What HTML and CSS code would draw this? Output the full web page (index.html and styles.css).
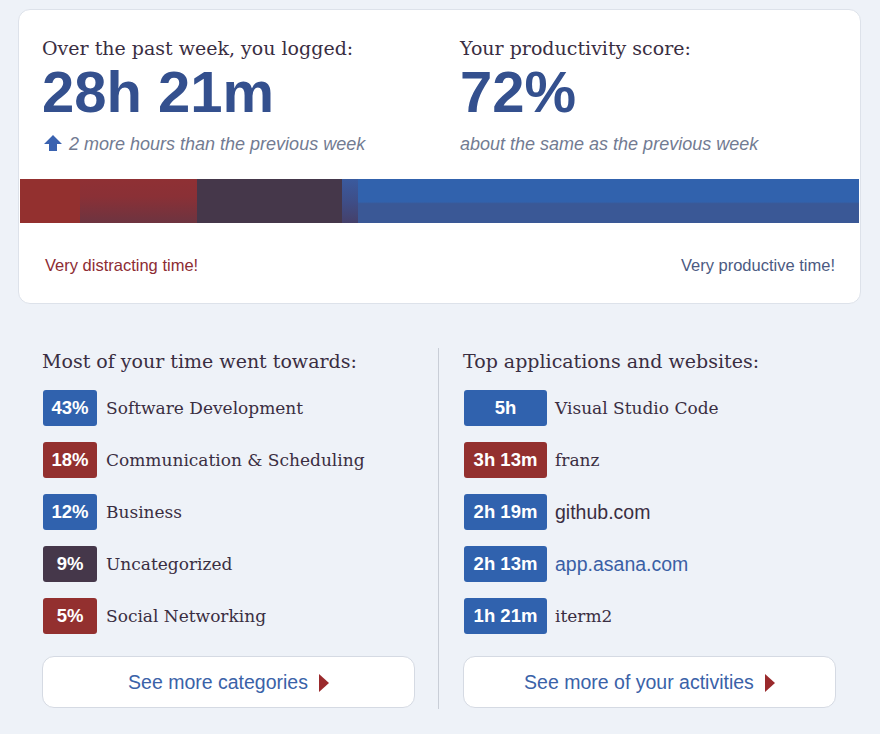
FILE: index.html
```html
<!DOCTYPE html>
<html>
<head>
<meta charset="utf-8">
<link rel="stylesheet" href="styles.css">
</head>
<body>
<div class="card">
  <div class="stats">
    <div class="stat stat-left">
      <div class="stat-title">Over the past week, you logged:</div>
      <div class="stat-value">28h 21m</div>
      <div class="stat-note">
        <svg class="up-arrow" width="20" height="18" viewBox="0 0 20 18"><path d="M10 1 L19 10 L14 10 L14 17 L6 17 L6 10 L1 10 Z" fill="#3a62b0"/></svg>
        <span>2 more hours than the previous week</span>
      </div>
    </div>
    <div class="stat stat-right">
      <div class="stat-title">Your productivity score:</div>
      <div class="stat-value">72%</div>
      <div class="stat-note"><span>about the same as the previous week</span></div>
    </div>
  </div>
  <div class="bar">
    <div class="seg seg-red"></div>
    <div class="seg seg-redmix"></div>
    <div class="seg seg-purple"></div>
    <div class="seg seg-mix"></div>
    <div class="seg seg-blue"></div>
  </div>
  <div class="bar-labels">
    <span class="lbl-bad">Very distracting time!</span>
    <span class="lbl-good">Very productive time!</span>
  </div>
</div>

<div class="lists">
  <div class="col col-left">
    <h2 class="col-title">Most of your time went towards:</h2>
    <ul class="rows">
      <li class="row"><span class="badge b-blue">43%</span><span class="name">Software Development</span></li>
      <li class="row"><span class="badge b-red">18%</span><span class="name">Communication &amp; Scheduling</span></li>
      <li class="row"><span class="badge b-blue">12%</span><span class="name">Business</span></li>
      <li class="row"><span class="badge b-purple">9%</span><span class="name">Uncategorized</span></li>
      <li class="row"><span class="badge b-red">5%</span><span class="name">Social Networking</span></li>
    </ul>
    <a class="more" href="#">See more categories <span class="tri"></span></a>
  </div>
  <div class="divider"></div>
  <div class="col col-right">
    <h2 class="col-title">Top applications and websites:</h2>
    <ul class="rows">
      <li class="row"><span class="badge wide b-blue">5h</span><span class="name">Visual Studio Code</span></li>
      <li class="row"><span class="badge wide b-red">3h 13m</span><span class="name">franz</span></li>
      <li class="row"><span class="badge wide b-blue">2h 19m</span><span class="name site">github.com</span></li>
      <li class="row"><span class="badge wide b-blue">2h 13m</span><span class="name site link">app.asana.com</span></li>
      <li class="row"><span class="badge wide b-blue">1h 21m</span><span class="name">iterm2</span></li>
    </ul>
    <a class="more" href="#">See more of your activities <span class="tri"></span></a>
  </div>
</div>
</body>
</html>
```

FILE: styles.css
```css
* { box-sizing: border-box; }
html, body { margin: 0; padding: 0; }
body {
  background: #eef2f8;
  width: 880px;
  height: 734px;
  overflow: hidden;
  font-family: "Liberation Sans", Arial, sans-serif;
  color: #3d3044;
}

.card {
  margin: 9px 0 0 18px;
  width: 843px;
  height: 295px;
  background: #fff;
  border: 1px solid #dde2ea;
  border-radius: 12px;
  overflow: hidden;
}

.stats {
  display: flex;
  padding: 25px 0 0 23px;
  height: 169px;
}
.stat-left { width: 418px; }
.stat-title {
  font-family: "DejaVu Serif", Georgia, serif;
  font-size: 19px;
  line-height: 26px;
  color: #3a2e42;
}
.stat-value {
  font-weight: bold;
  font-size: 58px;
  line-height: 56px;
  color: #34508e;
  margin-top: 3px;
}
.stat-note {
  display: flex;
  align-items: center;
  gap: 6px;
  font-style: italic;
  font-size: 18px;
  line-height: 22px;
  color: #727b92;
  margin-top: 13px;
}
.up-arrow { margin-left: 1px; margin-top: -2px; }

.bar {
  display: flex;
  height: 44px;
  margin: 0 1px;
}
.seg { height: 100%; }
.seg-red { width: 60px; background: #93302f; }
.seg-redmix { width: 117px; background: linear-gradient(#8f3034 0%, #8a3036 40%, #6d3440 100%); }
.seg-purple { width: 145px; background: #45374a; }
.seg-mix { width: 16px; background: linear-gradient(#3a5a9e 0%, #3e4e88 50%, #45406a 100%); }
.seg-blue { flex: 1; background: linear-gradient(#3162ad 0%, #3162ad 52%, #3a5896 56%, #3a5896 100%); }

.bar-labels {
  display: flex;
  justify-content: space-between;
  padding: 32px 25px 0 26px;
  font-size: 16.5px;
  line-height: 20px;
}
.lbl-bad { color: #8d2c33; }
.lbl-good { color: #4c5a82; }

.lists {
  display: flex;
  margin-top: 44px;
  padding-left: 42px;
}
.col { width: 373px; }
.divider {
  width: 1px;
  background: #c9ced7;
  margin: 0 24px 0 23px;
  height: 361px;
}
.col-title {
  margin: 0;
  font-family: "DejaVu Serif", Georgia, serif;
  font-weight: normal;
  font-size: 19px;
  line-height: 26px;
  color: #3a2e42;
}
.rows {
  list-style: none;
  margin: 16px 0 0 0;
  padding: 0;
  display: flex;
  flex-direction: column;
  gap: 16px;
}
.row {
  display: flex;
  align-items: center;
  height: 36px;
}
.badge {
  display: flex;
  align-items: center;
  justify-content: center;
  width: 54px;
  height: 36px;
  margin-left: 1px;
  border-radius: 3px;
  color: #fff;
  font-weight: bold;
  font-size: 18.5px;
}
.badge.wide { width: 83px; }
.b-blue { background: #3062ae; }
.b-red { background: #93302f; }
.b-purple { background: #45374a; }
.name {
  margin-left: 9px;
  font-family: "DejaVu Serif", Georgia, serif;
  font-size: 17px;
  color: #3a2e42;
}
.badge.wide + .name { margin-left: 8px; }
.name.site {
  font-family: "Liberation Sans", Arial, sans-serif;
  font-size: 19.5px;
}
.name.link { color: #3a5fa5; }

.more {
  display: flex;
  align-items: center;
  justify-content: center;
  gap: 11px;
  margin-top: 22px;
  height: 52px;
  background: #fff;
  border: 1px solid #d5dae3;
  border-radius: 12px;
  color: #3a62a8;
  font-size: 19.5px;
  text-decoration: none;
}
.tri {
  width: 0;
  height: 0;
  border-top: 9px solid transparent;
  border-bottom: 9px solid transparent;
  border-left: 10px solid #9a2a2c;
  margin-top: 2px;
}
```
